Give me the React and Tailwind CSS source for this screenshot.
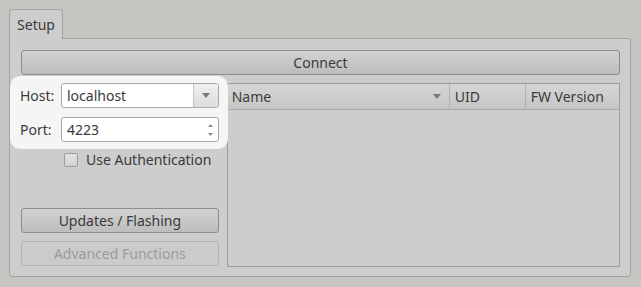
import React from "react";

const font = { fontFamily: '"Noto Sans", "Open Sans", sans-serif' };

function Btn({ children, disabled, className = "" }) {
  return (
    <div
      className={
        "flex items-center justify-center rounded-[3px] border h-[25px] text-[14px] " +
        (disabled
          ? "border-[#b4b4b4] bg-[#cbcbcb] text-[#9b9b9b] "
          : "border-[#8c8c8c] bg-gradient-to-b from-[#d2d2d2] to-[#bdbdbd] text-[#3a3a3a] ") +
        className
      }
    >
      {children}
    </div>
  );
}

export default function App() {
  return (
    <div
      className="w-[641px] h-[287px] bg-[#c6c5c2] pt-[9px] pl-[9px] pr-[10px] text-[#3a3a3a]"
      style={font}
    >
      <div className="flex">
        <div className="w-[54px] h-[30px] -mb-px relative z-10 bg-[#cdcdcd] border border-b-0 border-[#a3a3a3] rounded-t-[4px] flex items-center justify-center text-[14px] text-[#3a3a3a]">
          Setup
        </div>
      </div>
      <div className="w-[622px] h-[239px] bg-[#cdcdcd] border border-[#a3a3a3] rounded-b-[3px] rounded-tr-[3px] pl-[11px] pr-[10px] pt-[11px]">
        <Btn className="w-[599px]">Connect</Btn>
        <div className="flex mt-[8px] gap-[8px]">
          <div className="w-[198px] flex flex-col">
            <div className="relative z-10 -ml-[11px] -mr-[9px] -mt-[7px] pl-[10px] pr-[9px] pt-[7px] pb-[7px] bg-[#f5f5f5] rounded-[10px] flex flex-col gap-[9px]">
              <div className="flex items-center h-[25px]">
                <div className="w-[41px] text-[14px]">Host:</div>
                <div className="flex-1 h-[25px] flex border border-[#a9a9a9] rounded-[3px] bg-white overflow-hidden">
                  <div className="flex-1 flex items-center pl-[5px] text-[14px] text-[#3a3a3a]">localhost</div>
                  <div className="w-[25px] border-l border-[#c4c4c4] bg-gradient-to-b from-[#f0f0f0] to-[#dcdcdc] flex items-center justify-center">
                    <svg width="8" height="5" viewBox="0 0 8 5">
                      <path d="M0 0 L8 0 L4 5 Z" fill="#7a7a7a" />
                    </svg>
                  </div>
                </div>
              </div>
              <div className="flex items-center h-[25px]">
                <div className="w-[41px] text-[14px]">Port:</div>
                <div className="flex-1 h-[25px] flex border border-[#a9a9a9] rounded-[3px] bg-white overflow-hidden">
                  <div className="flex-1 flex items-center pl-[5px] text-[14px] text-[#3a3a3a]">4223</div>
                  <div className="w-[14px] flex flex-col items-center justify-center gap-[6px]">
                    <svg width="5" height="3" viewBox="0 0 5 3">
                      <path d="M0 3 L5 3 L2.5 0 Z" fill="#8a8a8a" />
                    </svg>
                    <svg width="5" height="3" viewBox="0 0 5 3">
                      <path d="M0 0 L5 0 L2.5 3 Z" fill="#8a8a8a" />
                    </svg>
                  </div>
                </div>
              </div>
            </div>
            <div className="flex items-center mt-[3px] ml-[43px] h-[15px]">
              <div className="w-[14px] h-[14px] rounded-[2px] border border-[#9c9c9c] bg-gradient-to-b from-[#e2e2e2] to-[#d2d2d2]" />
              <div className="ml-[8px] text-[14px]">Use Authentication</div>
            </div>
            <Btn className="mt-[41px]">Updates / Flashing</Btn>
            <Btn disabled className="mt-[8px]">Advanced Functions</Btn>
          </div>
          <div className="w-[394px] h-[184px] border border-[#9c9c9c] bg-[#cdcdcd]">
            <div className="flex h-[26px] border-b border-[#a9a9a9] bg-gradient-to-b from-[#d5d5d5] to-[#c6c6c6] text-[14px]">
              <div className="w-[222px] flex items-center pl-[4px] pr-[8px] border-r border-[#b2b2b2]">
                <span className="flex-1">Name</span>
                <svg width="8" height="5" viewBox="0 0 8 5">
                  <path d="M0 0 L8 0 L4 5 Z" fill="#7a7a7a" />
                </svg>
              </div>
              <div className="w-[76px] flex items-center pl-[5px] border-r border-[#b2b2b2]">UID</div>
              <div className="flex-1 flex items-center pl-[5px]">FW Version</div>
            </div>
          </div>
        </div>
      </div>
    </div>
  );
}
